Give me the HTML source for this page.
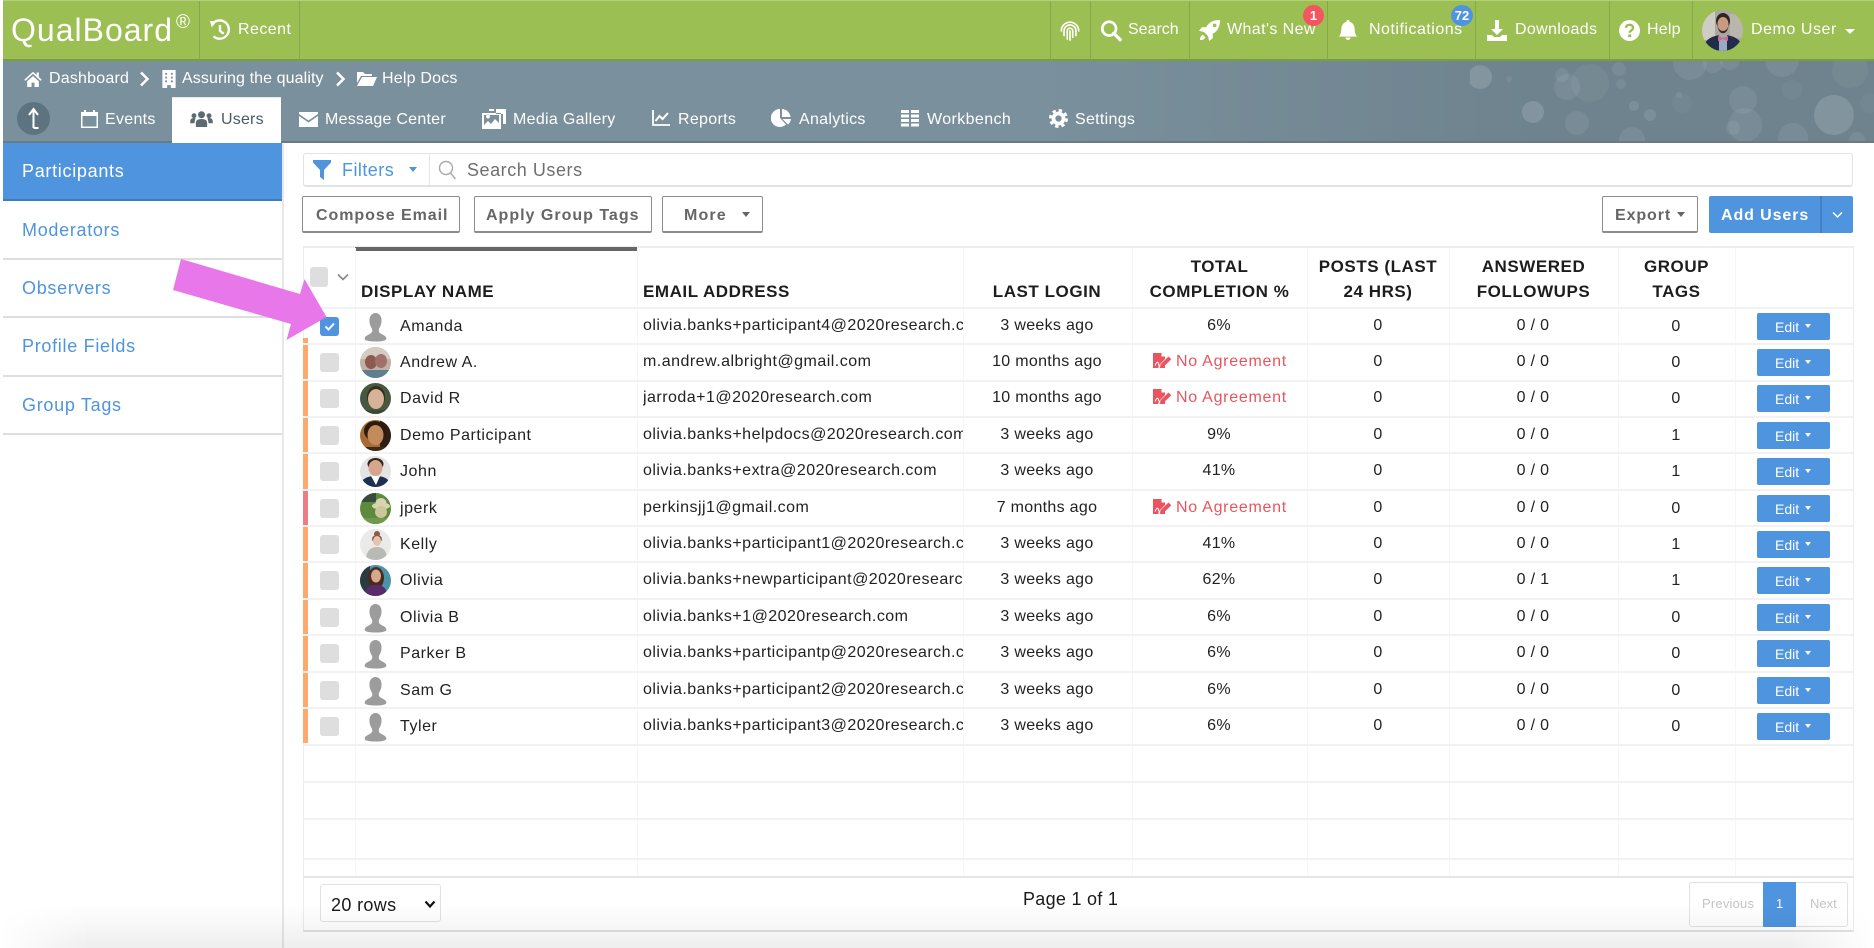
<!DOCTYPE html>
<html><head><meta charset="utf-8"><title>QualBoard Users</title>
<style>
html,body{margin:0;padding:0;background:#fff}
#p{position:relative;width:1874px;height:948px;overflow:hidden;background:#fff;font-family:"Liberation Sans",sans-serif;color:#222}
.t{position:absolute;white-space:nowrap;line-height:20px;font-size:16px}
.w{color:#fff}
.ic{position:absolute;fill:currentColor;color:#fff}
.abs{position:absolute}
.sep{position:absolute;top:1px;height:59px;width:1px;background:#85a94a}
.side{position:absolute;left:3px;width:279px;height:2px;background:#dedede}
.sl{position:absolute;left:22px;font-size:18px;line-height:24px;color:#4f94de;letter-spacing:.7px;white-space:nowrap}
.btn{position:absolute;top:196px;height:34px;border:1px solid #8c8c8c;border-bottom-width:2px;border-radius:2px;background:#fff;box-sizing:content-box}
.bt{position:absolute;top:205px;font-size:16px;line-height:20px;font-weight:bold;color:#666;letter-spacing:1.15px;white-space:nowrap}
.car{position:absolute;width:0;height:0;border-left:4px solid transparent;border-right:4px solid transparent;border-top:5px solid #666}
.v{position:absolute;top:248px;height:629px;width:1px;background:#f6f6f6}
.hl{position:absolute;left:303px;width:1550px;height:2px;background:#f2f2f2}
.th{position:absolute;font-size:17px;line-height:25px;font-weight:bold;color:#1d1d1d;text-align:center;white-space:nowrap;letter-spacing:.55px}
.r{position:absolute;left:303px;width:1550px;height:36.4px}
.bar{position:absolute;left:0;top:1px;width:5px;bottom:1px;background:#fba96c}
.pk{background:#ee7c86}
.cb{position:absolute;left:17px;top:9px;width:19px;height:19px;border-radius:3px;background:#dedede}
.av{position:absolute;left:57px;top:3px;width:31px;height:31px}
.si{position:absolute;left:60px;top:5px;width:25px;height:29px}
.n{position:absolute;left:97px;top:9px;font-size:16px;line-height:20px;white-space:nowrap;letter-spacing:.55px}
.e{position:absolute;left:340px;top:8px;width:320px;overflow:hidden;font-size:16px;line-height:20px;white-space:nowrap;letter-spacing:.48px}
.c{position:absolute;top:8px;width:160px;text-align:center;font-size:16px;line-height:20px;white-space:nowrap;letter-spacing:.3px}
.l{left:664px}.q{left:836px}.po{left:995px}.a{left:1150px}.g{left:1293px;top:9px}
.na{position:absolute;left:873px;top:8px;font-size:16px;line-height:20px;color:#e9545e;letter-spacing:.72px;white-space:nowrap}
.ni{position:absolute;left:850px;top:8px;width:19px;height:17px;fill:#e9545e}
.ed{position:absolute;left:1454px;top:5px;width:73px;height:27px;border-radius:2px;background:#4f94de;color:#fff;font-size:14px;line-height:28px;font-weight:400}
.ed span{position:absolute;left:18px;top:0}
.ed i{position:absolute;left:48px;top:11px;width:0;height:0;border-left:3.5px solid transparent;border-right:3.5px solid transparent;border-top:4px solid #fff}
</style></head><body>
<div id="p">
<svg width="0" height="0" style="position:absolute">
<defs>
<symbol id="sil" viewBox="0 0 31 31" preserveAspectRatio="none"><path fill="#9c9c9c" d="M15.500 0c4.600 0 7.500 3.400 7.500 8 0 3.500-1.500 6.500-3 8.600-.7 1-.8 3.400.7 4.600 2.500 1.900 8.300 3 8.300 6.300 0 2.300-7.700 3-13.500 3S2 29.800 2 27.500c0-3.300 5.800-4.400 8.300-6.300 1.500-1.200 1.400-3.600.7-4.600C9.500 14.500 8 11.500 8 8c0-4.600 2.900-8 7.500-8z"/></symbol>
<symbol id="noag" viewBox="0 0 19 17"><path d="M0 1h8.500l3.500 3.500V7L6 13l-.8 3 3-.8L12 11.500V16H0z"/><path d="M8.500 1v3.500H12z" fill="#fff"/><path d="M7.500 12.200L15.500 4.500l2.800 2.800L10.300 15l-3.300.6z"/><path d="M2 13.500c1-2 2-4 3-3s0 2.500 1 2.500" fill="none" stroke="#fff" stroke-width="1"/></symbol>
</defs>
</svg>

<!-- header -->
<div class="abs" style="left:3px;top:0;width:1871px;height:61px;background:#9bbf52;border-bottom:2px solid #7c9b42;box-sizing:border-box;border-top:1px solid #b4d07e"></div>
<div class="t w" style="left:11px;top:10px;font-size:32px;line-height:40px;letter-spacing:1px">QualBoard</div>
<div class="t w" style="left:176px;top:14px;font-size:19px;line-height:18px">®</div>
<div class="sep" style="left:199px"></div><div class="sep" style="left:299px"></div>
<svg class="ic" style="left:209px;top:19px;width:22px;height:22px" viewBox="0 0 24 24"><path fill="none" stroke="#fff" stroke-width="2.600" d="M4.500 4.500A10 10 0 1 1 5 19M12 6.500V13l4 3"/><path d="M1 2l7 1-5 6z"/></svg>
<div class="t w" style="left:238px;top:20px;letter-spacing:.45px">Recent</div>

<div class="sep" style="left:1050px"></div><div class="sep" style="left:1090px"></div><div class="sep" style="left:1189px"></div><div class="sep" style="left:1327px"></div><div class="sep" style="left:1475px"></div><div class="sep" style="left:1609px"></div><div class="sep" style="left:1692px"></div>
<svg class="ic" style="left:1059px;top:19px;width:22px;height:22px" viewBox="0 0 24 24" fill="none"><g fill="none" stroke="#fff" stroke-width="1.800" stroke-linecap="round"><path d="M2.500 13a9.500 9.500 0 0 1 19 0"/><path d="M5.500 18v-5a6.500 6.500 0 0 1 13 0v5"/><path d="M9 22v-9a3 3 0 0 1 6 0v7"/><path d="M12 13v10"/></g></svg>
<svg class="ic" style="left:1100px;top:19px;width:22px;height:23px" viewBox="0 0 24 24"><circle cx="10" cy="10" r="7.500" fill="none" stroke="#fff" stroke-width="3"/><path d="M15 15l7 7" stroke="#fff" stroke-width="3.600" stroke-linecap="round"/></svg>
<div class="t w" style="left:1128px;top:20px">Search</div>
<svg class="ic" style="left:1199px;top:18px;width:22px;height:24px" viewBox="0 0 24 24"><path d="M23 1c-6 0-11 2-14 6L8 9H3L0 13l5 1c1 .5 4 3.500 5 5l1 5 4-3v-5l2-1c4-3 6-8 6-14z"/><circle cx="17" cy="7" r="2" fill="#9bbf52"/><path d="M4 17c-2 1-3 3-3 6 3 0 5-1 6-3z"/></svg>
<div class="t w" style="left:1227px;top:20px;letter-spacing:.4px">What's New</div>
<div class="abs" style="left:1303px;top:5px;width:21px;height:21px;border-radius:50%;background:#f4555f;color:#fff;font-size:13px;font-weight:bold;line-height:21px;text-align:center">1</div>
<svg class="ic" style="left:1338px;top:18px;width:20px;height:24px" viewBox="0 0 24 24"><path d="M12 0a2 2 0 0 1 2 2.300c4 1 6 4.700 6 8.700 0 5 1.500 7 3 9H1c1.500-2 3-4 3-9 0-4 2-7.700 6-8.700A2 2 0 0 1 12 0zM9 21h6a3 3 0 0 1-6 0z"/></svg>
<div class="t w" style="left:1369px;top:20px;letter-spacing:.5px">Notifications</div>
<div class="abs" style="left:1451px;top:5px;width:22px;height:21px;border-radius:50%;background:#4f94de;color:#fff;font-size:13px;font-weight:bold;line-height:21px;text-align:center">72</div>
<svg class="ic" style="left:1487px;top:20px;width:20px;height:21px" viewBox="0 0 20 21"><path d="M8 0h4v9h4l-6 6-6-6h4z"/><path d="M0 15h5l2 2h6l2-2h5v6H0z"/></svg>
<div class="t w" style="left:1515px;top:20px;letter-spacing:.35px">Downloads</div>
<svg class="ic" style="left:1619px;top:20px;width:21px;height:21px" viewBox="0 0 24 24"><circle cx="12" cy="12" r="12"/><path d="M8 9c0-2.500 2-3.500 4-3.500s4 1.200 4 3.500c0 3-3.800 3-3.800 5.500" fill="none" stroke="#9bbf52" stroke-width="2.700"/><rect x="10.500" y="16.500" width="3.400" height="3.200" fill="#9bbf52"/></svg>
<div class="t w" style="left:1647px;top:20px;letter-spacing:.2px">Help</div>
<svg class="abs" style="left:1702px;top:10px;width:41px;height:41px" viewBox="0 0 41 41"><defs><clipPath id="cu"><circle cx="20.500" cy="20.500" r="20.500"/></clipPath></defs><g clip-path="url(#cu)"><rect width="41" height="41" fill="#a9a8a0"/><rect x="0" y="0" width="13" height="30" fill="#cfccc4"/><rect x="28" y="4" width="13" height="24" fill="#b9b6ad"/><ellipse cx="21" cy="11" rx="7" ry="8" fill="#2f2420"/><ellipse cx="21" cy="14" rx="5.500" ry="7" fill="#c99a80"/><path d="M15.500 15c1 8 10 8 11 0-.5 11-10.500 11-11 0z" fill="#3a2a22"/><path d="M1 41c0-11 9-16 20-16s20 5 20 16z" fill="#202c4a"/><rect x="17" y="25" width="8" height="16" fill="#9ca8c4"/><path d="M16 26l5 2 5-2v5l-5-2-5 2z" fill="#d66a78"/></g></svg>
<div class="t w" style="left:1751px;top:20px;letter-spacing:.55px">Demo User</div>
<div class="car" style="left:1845px;top:29px;border-left-width:5px;border-right-width:5px;border-top:5px solid #fff"></div>

<!-- band -->
<div class="abs" style="left:3px;top:61px;width:1871px;height:82px;background:linear-gradient(90deg,#7a909c 0,#7a909c 55%,#6e838e 82%,#6e838e 100%);border-bottom:2px solid #667b86;box-sizing:border-box"></div>
<svg class="abs" style="left:1470px;top:61px;width:404px;height:80px" viewBox="1470 61 404 80">
<g fill="#fff" fill-opacity=".07"><circle cx="1480" cy="77" r="12" fill-opacity=".14"/><circle cx="1509" cy="79" r="3"/><circle cx="1533" cy="112" r="11" fill-opacity=".14"/><circle cx="1562" cy="75" r="7"/><circle cx="1567" cy="87" r="13"/><circle cx="1590" cy="83" r="19" fill-opacity=".05"/><circle cx="1619" cy="69" r="7"/><circle cx="1621" cy="84" r="5"/><circle cx="1634" cy="106" r="5" fill-opacity=".1"/><circle cx="1650" cy="115" r="6" fill-opacity=".1"/><circle cx="1577" cy="123" r="12"/><circle cx="1632" cy="140" r="13"/><circle cx="1690" cy="63" r="17"/><circle cx="1713" cy="63" r="10"/><circle cx="1730" cy="60" r="10"/><circle cx="1682" cy="103" r="10" fill-opacity=".04"/><circle cx="1679" cy="95" r="3"/><circle cx="1743" cy="100" r="14"/><circle cx="1792" cy="90" r="10" fill-opacity=".04"/><circle cx="1782" cy="60" r="17"/><circle cx="1850" cy="70" r="18" fill-opacity=".05"/><circle cx="1745" cy="125" r="17"/><circle cx="1733" cy="128" r="7"/><circle cx="1793" cy="138" r="15"/><circle cx="1834" cy="115" r="20" fill-opacity=".14"/><circle cx="1870" cy="103" r="10" fill-opacity=".04"/><circle cx="1857" cy="140" r="8"/></g></svg>
<svg class="ic" style="left:24px;top:71px;width:18px;height:16px" viewBox="0 0 24 22"><path d="M12 1L0 12l1.500 1.600L12 4l10.500 9.600L24 12l-4-3.700V2h-3v3.500z"/><path d="M4 14l8-7 8 7v8h-6v-6h-4v6H4z"/></svg>
<div class="t w" style="left:49px;top:69px;letter-spacing:.2px">Dashboard</div>
<svg class="abs" style="left:139px;top:71px;width:11px;height:16px" viewBox="0 0 11 16"><path d="M2 1.500l6.500 6.500L2 14.500" fill="none" stroke="#fff" stroke-width="2.500"/></svg>
<svg class="ic" style="left:162px;top:70px;width:14px;height:18px" viewBox="0 0 14 19"><path fill-rule="evenodd" d="M0 0h14v19H9v-3H5v3H0zM3 3v2h2V3zm6 0v2h2V3zM3 7v2h2V7zm6 0v2h2V7zM3 11v2h2v-2zm6 0v2h2v-2z"/></svg>
<div class="t w" style="left:182px;top:69px;letter-spacing:.1px">Assuring the quality</div>
<svg class="abs" style="left:335px;top:71px;width:11px;height:16px" viewBox="0 0 11 16"><path d="M2 1.500l6.500 6.500L2 14.500" fill="none" stroke="#fff" stroke-width="2.500"/></svg>
<svg class="ic" style="left:357px;top:72px;width:20px;height:14px" viewBox="0 0 20 14"><path d="M0 0h6l2 2h7v2H4L0 11z"/><path d="M5 5h15l-4 9H0z"/></svg>
<div class="t w" style="left:382px;top:69px;letter-spacing:.2px">Help Docs</div>

<div class="abs" style="left:17px;top:102px;width:33px;height:33px;border-radius:50%;background:#5d7380"></div>
<svg class="abs" style="left:17px;top:102px;width:33px;height:33px" viewBox="0 0 33 33"><path d="M16.500 26V8M12 13l4.500-6 4.500 6M16.500 26h5" fill="none" stroke="#fff" stroke-width="2"/></svg>
<svg class="ic" style="left:81px;top:110px;width:17px;height:18px" viewBox="0 0 17 18"><path fill-rule="evenodd" d="M0 2h3V0h2v2h7V0h2v2h3v16H0zM1.500 6v10.500h14V6z"/></svg>
<div class="t w" style="left:105px;top:110px;letter-spacing:.3px">Events</div>
<div class="abs" style="left:172px;top:97px;width:109px;height:46px;background:#fff;border-top:1px solid #e4e8ea;box-sizing:border-box"></div>
<svg class="ic" style="left:190px;top:111px;width:23px;height:16px;color:#5d6a72" viewBox="0 0 24 17"><circle cx="12" cy="4" r="3.700"/><circle cx="4" cy="5" r="2.600"/><circle cx="20" cy="5" r="2.600"/><path d="M6 17v-4c0-3 2-4.500 6-4.500s6 1.500 6 4.500v4z"/><path d="M0 12c0-3 1-4.500 4-4.500.8 0 1.500.2 1.800.6C5 9.500 4.600 11 4.600 13H0zM24 12c0-3-1-4.500-4-4.500-.8 0-1.500.2-1.800.6.800 1.400 1.200 2.900 1.200 4.900H24z"/></svg>
<div class="t" style="left:221px;top:110px;color:#4a5a63;letter-spacing:.2px">Users</div>
<svg class="ic" style="left:299px;top:112px;width:19px;height:15px" viewBox="0 0 19 15"><path d="M0 0h19v2L9.500 8.500 0 2zM0 4l9.500 6.500L19 4v11H0z"/></svg>
<div class="t w" style="left:325px;top:110px;letter-spacing:.25px">Message Center</div>
<svg class="ic" style="left:482px;top:109px;width:24px;height:20px" viewBox="0 0 24 20"><path fill-rule="evenodd" d="M7 0h5v2H7zM14 0h10v15h-3V5h-7zM0 4h19v16H0zM2 6v10l4-4 3 3 4-5 4 4V6zM4 7.500a2 2 0 1 1 0 .1z"/></svg>
<div class="t w" style="left:513px;top:110px;letter-spacing:.3px">Media Gallery</div>
<svg class="ic" style="left:652px;top:110px;width:18px;height:16px" viewBox="0 0 18 16"><path d="M1 0v15h17" fill="none" stroke="#fff" stroke-width="1.800"/><path d="M3.500 11l4-5 3 3 5.500-6" fill="none" stroke="#fff" stroke-width="2"/></svg>
<div class="t w" style="left:678px;top:110px;letter-spacing:.3px">Reports</div>
<svg class="ic" style="left:771px;top:109px;width:20px;height:18px" viewBox="0 0 20 18"><path d="M9 0v9l6 6.500A9 9 0 1 1 9 0z"/><path d="M11 0a9 9 0 0 1 8.500 8H11z"/><path d="M11.500 10H20a9 9 0 0 1-3 5.500z"/></svg>
<div class="t w" style="left:799px;top:110px;letter-spacing:.3px">Analytics</div>
<svg class="ic" style="left:901px;top:110px;width:18px;height:17px" viewBox="0 0 18 17"><path fill-rule="evenodd" d="M0 0h8v3H0zM10 0h8v3h-8zM0 4.500h8v3H0zM10 4.500h8v3h-8zM0 9h8v3H0zM10 9h8v3h-8zM0 13.500h8v3H0zM10 13.500h8v3h-8z"/></svg>
<div class="t w" style="left:927px;top:110px;letter-spacing:.4px">Workbench</div>
<svg class="ic" style="left:1049px;top:109px;width:19px;height:19px" viewBox="0 0 20 20"><circle cx="10" cy="10" r="5.300" fill="none" stroke="#fff" stroke-width="4"/><circle cx="10" cy="10" r="8.500" fill="none" stroke="#fff" stroke-width="3" stroke-dasharray="3.500 3.170"/></svg>
<div class="t w" style="left:1075px;top:110px;letter-spacing:.3px">Settings</div>

<!-- sidebar -->
<div class="abs" style="left:3px;top:143px;width:279px;height:58px;background:#4f94de;border-bottom:2px solid #3f7cbd;box-sizing:border-box"></div>
<div class="sl" style="top:159px;color:#fff">Participants</div>
<div class="sl" style="top:218px">Moderators</div>
<div class="side" style="top:258px"></div>
<div class="sl" style="top:276px">Observers</div>
<div class="side" style="top:316px"></div>
<div class="sl" style="top:334px">Profile Fields</div>
<div class="side" style="top:375px"></div>
<div class="sl" style="top:393px">Group Tags</div>
<div class="side" style="top:433px"></div>
<div class="abs" style="left:282px;top:143px;width:2px;height:805px;background:#e8e8e8"></div>

<!-- filter bar -->
<div class="abs" style="left:303px;top:153px;width:1550px;height:34px;border:1px solid #e3e3e3;border-bottom-width:2px;border-radius:3px;box-sizing:border-box"></div>
<div class="abs" style="left:429px;top:154px;width:1px;height:32px;background:#e6e6e6"></div>
<svg class="ic" style="left:313px;top:160px;width:18px;height:20px;color:#4f94de" viewBox="0 0 18 20"><path d="M0 0h18v2.500L11 10v10l-4-3v-7L0 2.500z"/></svg>
<div class="t" style="left:342px;top:160px;font-size:18px;color:#4f94de;letter-spacing:.45px">Filters</div>
<div class="car" style="left:409px;top:167px;border-top-color:#4f94de"></div>
<svg class="abs" style="left:438px;top:160px;width:19px;height:20px" viewBox="0 0 19 20"><circle cx="8" cy="8" r="6.500" fill="none" stroke="#aaa" stroke-width="1.400"/><path d="M12.500 13l5 6" stroke="#aaa" stroke-width="1.400"/></svg>
<div class="t" style="left:467px;top:160px;font-size:18px;color:#6f6f6f;letter-spacing:.55px">Search Users</div>

<!-- buttons -->
<div class="btn" style="left:302px;width:156px"></div><div class="bt" style="left:316px;top:206px;letter-spacing:.95px">Compose Email</div>
<div class="btn" style="left:474px;width:176px"></div><div class="bt" style="left:486px;top:206px;letter-spacing:1px">Apply Group Tags</div>
<div class="btn" style="left:662px;width:99px"></div><div class="bt" style="left:684px;top:206px">More</div>
<div class="car" style="left:742px;top:212px"></div>
<div class="btn" style="left:1602px;width:94px"></div><div class="bt" style="left:1615px;top:206px;letter-spacing:.9px">Export</div>
<div class="car" style="left:1677px;top:212px"></div>
<div class="abs" style="left:1709px;top:196px;width:144px;height:37px;background:#4f94de;border-radius:2px"></div>
<div class="abs" style="left:1820px;top:196px;width:2px;height:37px;background:#4580c2"></div>
<div class="bt" style="left:1721px;top:206px;color:#fff;letter-spacing:.9px">Add Users</div>
<svg class="abs" style="left:1832px;top:211px;width:11px;height:8px" viewBox="0 0 11 8"><path d="M1 1.500l4.500 4.500L10 1.500" fill="none" stroke="#fff" stroke-width="1.500"/></svg>

<!-- table frame -->
<div class="abs" style="left:303px;top:246px;width:1551px;height:686px;border:1px solid #ececec;border-top:2px solid #eee;border-bottom:2px solid #e2e2e2;box-sizing:border-box"></div>
<div class="abs" style="left:355px;top:247px;width:282px;height:4px;background:#666"></div>
<div class="v" style="left:355px"></div><div class="v" style="left:637px"></div><div class="v" style="left:963px"></div><div class="v" style="left:1132px"></div><div class="v" style="left:1307px"></div><div class="v" style="left:1449px"></div><div class="v" style="left:1618px"></div><div class="v" style="left:1735px"></div>
<div class="abs" style="left:310px;top:267px;width:18px;height:20px;border-radius:3px;background:#dedede"></div>
<svg class="abs" style="left:337px;top:273px;width:12px;height:8px" viewBox="0 0 12 8"><path d="M1 1.500l5 5 5-5" fill="none" stroke="#888" stroke-width="1.600"/></svg>
<div class="th" style="left:361px;top:279px">DISPLAY NAME</div>
<div class="th" style="left:643px;top:279px">EMAIL ADDRESS</div>
<div class="th" style="left:967px;width:160px;top:279px">LAST LOGIN</div>
<div class="th" style="left:1132px;width:175px;top:254px">TOTAL<br>COMPLETION %</div>
<div class="th" style="left:1307px;width:142px;top:254px">POSTS (LAST<br>24 HRS)</div>
<div class="th" style="left:1449px;width:169px;top:254px">ANSWERED<br>FOLLOWUPS</div>
<div class="th" style="left:1618px;width:117px;top:254px">GROUP<br>TAGS</div>
<div class="hl" style="top:307px"></div>

<div class="hl" style="top:343px"></div><div class="hl" style="top:380px"></div><div class="hl" style="top:416px"></div><div class="hl" style="top:452px"></div><div class="hl" style="top:489px"></div><div class="hl" style="top:525px"></div><div class="hl" style="top:561px"></div><div class="hl" style="top:598px"></div><div class="hl" style="top:634px"></div><div class="hl" style="top:671px"></div><div class="hl" style="top:707px"></div><div class="hl" style="top:744px"></div><div class="hl" style="top:781px"></div><div class="hl" style="top:818px"></div><div class="hl" style="top:858px"></div>
<div class="hl" style="top:876px;background:#e6e6e6"></div>

<!-- rows -->
<div class="r" style="top:308px"><i class="bar" style="top:30px"></i><i class="cb" style="background:#4f94de"></i><svg class="abs" style="left:17px;top:9px;width:19px;height:19px" viewBox="0 0 19 19"><path d="M5.500 9.500l3 3 5.500-6" fill="none" stroke="#fff" stroke-width="2"/></svg><svg class="si"><use href="#sil"/></svg><span class="n">Amanda</span><span class="e">olivia.banks+participant4@2020research.com</span><span class="c l">3 weeks ago</span><span class="c q">6%</span><span class="c po">0</span><span class="c a">0 / 0</span><span class="c g">0</span><b class="ed"><span>Edit</span><i></i></b></div>

<div class="r" style="top:344px"><i class="bar"></i><i class="cb"></i><svg class="av" viewBox="0 0 31 31"><defs><clipPath id="c1"><circle cx="15.500" cy="15.500" r="15.500"/></clipPath></defs><g clip-path="url(#c1)"><rect width="31" height="31" fill="#bfb2a4"/><rect width="31" height="12" fill="#d3ccc0"/><ellipse cx="11" cy="15" rx="6" ry="7" fill="#8c5a50"/><ellipse cx="21" cy="14" rx="6" ry="7" fill="#a0706a"/><rect y="23" width="31" height="8" fill="#5f7f90"/></g></svg><span class="n">Andrew A.</span><span class="e">m.andrew.albright@gmail.com</span><span class="c l">10 months ago</span><svg class="ni"><use href="#noag"/></svg><span class="na">No Agreement</span><span class="c po">0</span><span class="c a">0 / 0</span><span class="c g">0</span><b class="ed"><span>Edit</span><i></i></b></div>

<div class="r" style="top:380.4px"><i class="bar"></i><i class="cb"></i><svg class="av" viewBox="0 0 31 31"><defs><clipPath id="c2"><circle cx="15.500" cy="15.500" r="15.500"/></clipPath></defs><g clip-path="url(#c2)"><rect width="31" height="31" fill="#46593f"/><ellipse cx="16" cy="14" rx="9" ry="11" fill="#3a2a20"/><ellipse cx="16" cy="16" rx="8" ry="10" fill="#d6b296"/><rect y="27" width="31" height="4" fill="#3b4a38"/></g></svg><span class="n">David R</span><span class="e">jarroda+1@2020research.com</span><span class="c l">10 months ago</span><svg class="ni"><use href="#noag"/></svg><span class="na">No Agreement</span><span class="c po">0</span><span class="c a">0 / 0</span><span class="c g">0</span><b class="ed"><span>Edit</span><i></i></b></div>

<div class="r" style="top:416.8px"><i class="bar"></i><i class="cb"></i><svg class="av" viewBox="0 0 31 31"><defs><clipPath id="c3"><circle cx="15.500" cy="15.500" r="15.500"/></clipPath></defs><g clip-path="url(#c3)"><rect width="31" height="31" fill="#a66a32"/><rect x="20" width="11" height="31" fill="#2e1e14"/><ellipse cx="15" cy="11" rx="11" ry="10" fill="#2a1a10"/><ellipse cx="15.500" cy="15" rx="8" ry="10" fill="#c38a5c"/><rect y="27" width="31" height="4" fill="#3a2a1a"/></g></svg><span class="n">Demo Participant</span><span class="e">olivia.banks+helpdocs@2020research.com</span><span class="c l">3 weeks ago</span><span class="c q">9%</span><span class="c po">0</span><span class="c a">0 / 0</span><span class="c g">1</span><b class="ed"><span>Edit</span><i></i></b></div>

<div class="r" style="top:453.2px"><i class="bar"></i><i class="cb"></i><svg class="av" viewBox="0 0 31 31"><defs><clipPath id="c4"><circle cx="15.500" cy="15.500" r="15.500"/></clipPath></defs><g clip-path="url(#c4)"><rect width="31" height="31" fill="#e4e4e4"/><ellipse cx="15.500" cy="8" rx="8" ry="6" fill="#33231c"/><ellipse cx="15.500" cy="12" rx="7" ry="8" fill="#d6a68c"/><path d="M0 31c0-7 6-11 15.500-11S31 24 31 31z" fill="#1f2f4f"/><path d="M11 20h9l-4 9z" fill="#fff"/></g></svg><span class="n">John</span><span class="e">olivia.banks+extra@2020research.com</span><span class="c l">3 weeks ago</span><span class="c q">41%</span><span class="c po">0</span><span class="c a">0 / 0</span><span class="c g">1</span><b class="ed"><span>Edit</span><i></i></b></div>

<div class="r" style="top:489.6px"><i class="bar pk"></i><i class="cb"></i><svg class="av" viewBox="0 0 31 31"><defs><clipPath id="c5"><circle cx="15.500" cy="15.500" r="15.500"/></clipPath></defs><g clip-path="url(#c5)"><rect width="31" height="31" fill="#5d8a3c"/><rect width="16" height="9" fill="#3a4a3a"/><ellipse cx="21" cy="13" rx="9" ry="3.500" fill="#d8d4b0"/><ellipse cx="21" cy="10" rx="5.500" ry="5" fill="#d8d4b0"/><ellipse cx="21" cy="19" rx="6" ry="6" fill="#cfc59c"/><rect y="25" width="31" height="6" fill="#6f9a4c"/></g></svg><span class="n">jperk</span><span class="e">perkinsjj1@gmail.com</span><span class="c l">7 months ago</span><svg class="ni"><use href="#noag"/></svg><span class="na">No Agreement</span><span class="c po">0</span><span class="c a">0 / 0</span><span class="c g">0</span><b class="ed"><span>Edit</span><i></i></b></div>

<div class="r" style="top:526px"><i class="bar"></i><i class="cb"></i><svg class="av" viewBox="0 0 31 31"><defs><clipPath id="c6"><circle cx="15.500" cy="15.500" r="15.500"/></clipPath></defs><g clip-path="url(#c6)"><rect width="31" height="31" fill="#eceae8"/><circle cx="17" cy="5" r="3" fill="#8a5a4a"/><ellipse cx="17" cy="10" rx="5" ry="4" fill="#8a5a4a"/><ellipse cx="17" cy="12" rx="4" ry="5" fill="#e6c4ac"/><path d="M6 31c0-8 4-13 11-13s10 5 10 13z" fill="#b9b9b5"/></g></svg><span class="n">Kelly</span><span class="e">olivia.banks+participant1@2020research.com</span><span class="c l">3 weeks ago</span><span class="c q">41%</span><span class="c po">0</span><span class="c a">0 / 0</span><span class="c g">1</span><b class="ed"><span>Edit</span><i></i></b></div>

<div class="r" style="top:562.4px"><i class="bar"></i><i class="cb"></i><svg class="av" viewBox="0 0 31 31"><defs><clipPath id="c7"><circle cx="15.500" cy="15.500" r="15.500"/></clipPath></defs><g clip-path="url(#c7)"><rect width="31" height="31" fill="#4a93a8"/><rect width="10" height="31" fill="#2c3a42"/><ellipse cx="16" cy="13" rx="8" ry="11" fill="#4a2a20"/><ellipse cx="16" cy="11" rx="5" ry="6.500" fill="#d8a88c"/><path d="M5 31c0-8 4-11 11-11s11 3 11 11z" fill="#5b2a6a"/></g></svg><span class="n">Olivia</span><span class="e">olivia.banks+newparticipant@2020research.com</span><span class="c l">3 weeks ago</span><span class="c q">62%</span><span class="c po">0</span><span class="c a">0 / 1</span><span class="c g">1</span><b class="ed"><span>Edit</span><i></i></b></div>

<div class="r" style="top:598.8px"><i class="bar"></i><i class="cb"></i><svg class="si"><use href="#sil"/></svg><span class="n">Olivia B</span><span class="e">olivia.banks+1@2020research.com</span><span class="c l">3 weeks ago</span><span class="c q">6%</span><span class="c po">0</span><span class="c a">0 / 0</span><span class="c g">0</span><b class="ed"><span>Edit</span><i></i></b></div>

<div class="r" style="top:635.2px"><i class="bar"></i><i class="cb"></i><svg class="si"><use href="#sil"/></svg><span class="n">Parker B</span><span class="e">olivia.banks+participantp@2020research.com</span><span class="c l">3 weeks ago</span><span class="c q">6%</span><span class="c po">0</span><span class="c a">0 / 0</span><span class="c g">0</span><b class="ed"><span>Edit</span><i></i></b></div>

<div class="r" style="top:671.6px"><i class="bar"></i><i class="cb"></i><svg class="si"><use href="#sil"/></svg><span class="n">Sam G</span><span class="e">olivia.banks+participant2@2020research.com</span><span class="c l">3 weeks ago</span><span class="c q">6%</span><span class="c po">0</span><span class="c a">0 / 0</span><span class="c g">0</span><b class="ed"><span>Edit</span><i></i></b></div>

<div class="r" style="top:708px"><i class="bar"></i><i class="cb"></i><svg class="si"><use href="#sil"/></svg><span class="n">Tyler</span><span class="e">olivia.banks+participant3@2020research.com</span><span class="c l">3 weeks ago</span><span class="c q">6%</span><span class="c po">0</span><span class="c a">0 / 0</span><span class="c g">0</span><b class="ed"><span>Edit</span><i></i></b></div>

<!-- footer -->
<div class="abs" style="left:320px;top:884px;width:121px;height:38px;border:1px solid #e2e2e2;border-radius:3px;box-sizing:border-box;background:#fff"></div>
<div class="t" style="left:331px;top:895px;font-size:18px;color:#1a1a1a;letter-spacing:.35px">20 rows</div>
<svg class="abs" style="left:424px;top:900px;width:12px;height:9px" viewBox="0 0 12 9"><path d="M1.500 1.500L6 6.500l4.500-5" fill="none" stroke="#111" stroke-width="2.200"/></svg>
<div class="t" style="left:1023px;top:889px;font-size:18px;color:#1a1a1a;letter-spacing:.28px">Page 1 of 1</div>
<div class="abs" style="left:1689px;top:882px;width:159px;height:45px;border:1px solid #e2e2e2;border-radius:3px;box-sizing:border-box;background:#fff"></div>
<div class="abs" style="left:1763px;top:882px;width:33px;height:45px;background:#4f94de"></div>
<div class="t" style="left:1702px;top:894px;font-size:13px;color:#c4c4c4;letter-spacing:.2px">Previous</div>
<div class="t" style="left:1776px;top:894px;font-size:13px;color:#fff">1</div>
<div class="t" style="left:1810px;top:894px;font-size:13px;color:#c4c4c4">Next</div>

<!-- bottom fade -->
<div class="abs" style="left:0;top:905px;width:1874px;height:43px;background:linear-gradient(180deg,rgba(0,0,0,0),rgba(0,0,0,.065));-webkit-mask-image:linear-gradient(90deg,transparent 0,#000 90px,#000 1790px,transparent 1874px)"></div>

<!-- arrow -->
<svg class="abs" style="left:0;top:0;width:1874px;height:948px;pointer-events:none" viewBox="0 0 1874 948"><polygon points="181,259 300,294 304.500,279 326.500,317 286.500,340 291,324 173,290" fill="#e878ea"/></svg>
</div>
</body></html>
